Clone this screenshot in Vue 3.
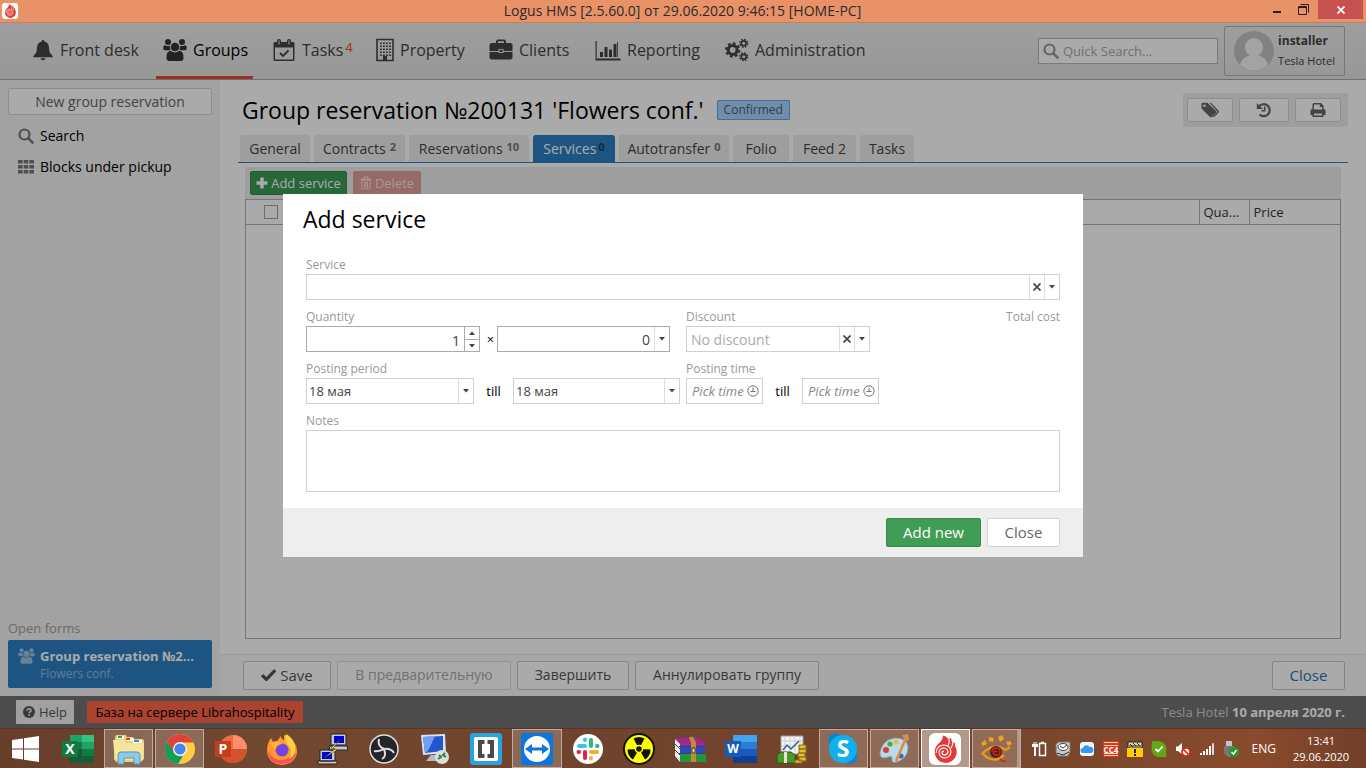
<script setup>
import { ref } from 'vue';

const menu = [
	{ title: 'Front desk', icon: 'bell' },
	{ title: 'Groups', icon: 'users', active: true },
	{ title: 'Tasks', icon: 'calendar', count: 4 },
	{ title: 'Property', icon: 'building' },
	{ title: 'Clients', icon: 'briefcase' },
	{ title: 'Reporting', icon: 'chart' },
	{ title: 'Administration', icon: 'gears' },
];

const tabs = [
	{ title: 'General' },
	{ title: 'Contracts', count: '2' },
	{ title: 'Reservations', count: '10' },
	{ title: 'Services', count: '0' },
	{ title: 'Autotransfer', count: '0' },
	{ title: 'Folio' },
	{ title: 'Feed 2' },
	{ title: 'Tasks' },
];

const taskbar = [
	{ name: 'Excel', icon: 'excel' },
	{ name: 'Explorer', icon: 'explorer', open: true },
	{ name: 'Chrome', icon: 'chrome', open: true },
	{ name: 'PowerPoint', icon: 'powerpoint' },
	{ name: 'Firefox', icon: 'firefox' },
	{ name: 'PuTTY', icon: 'putty' },
	{ name: 'OBS', icon: 'obs' },
	{ name: 'Remote desktop', icon: 'remote' },
	{ name: 'Brackets', icon: 'brackets' },
	{ name: 'TeamViewer', icon: 'teamviewer', open: true },
	{ name: 'Slack', icon: 'slack' },
	{ name: 'Radiation', icon: 'radiation' },
	{ name: 'WinRAR', icon: 'winrar' },
	{ name: 'Word', icon: 'word' },
	{ name: 'Money', icon: 'money' },
	{ name: 'Skype', icon: 'skype', open: true },
	{ name: 'Paint', icon: 'paint', open: true },
	{ name: 'Logus', icon: 'logus', open: true, current: true },
	{ name: 'Viewer', icon: 'eye', open: true, stacked: true },
];

const tray = ['power', 'disk', 'cloud', 'cc', 'warning', 'shield', 'volume', 'signal', 'usb'];

const activeTab = ref('Services');
const service = ref('');
const quantity = ref(1);
const price = ref('0');
const discount = ref('');
const dateFrom = ref('18 мая');
const dateTill = ref('18 мая');
const timeFrom = ref('');
const timeTill = ref('');
const notes = ref('');
</script>

<template>
	<svg class="sprite" aria-hidden="true">
		<symbol id="bell" viewBox="0 0 24 24">
			<path d="M12 1c1 0 1.500.7 1.500 1.600C17.500 3.500 18.500 7 18.600 10c.1 4 1 6 4 8.500v1.500H1.400v-1.500c3-2.500 3.900-4.500 4-8.500C5.500 7 6.500 3.500 10.500 2.600 10.500 1.700 11 1 12 1zM9.300 21h5.400a2.700 2.300 0 0 1-5.400 0z" />
		</symbol>
		<symbol id="users" viewBox="0 0 24 24">
			<circle cx="5" cy="4" r="3" />
			<circle cx="19" cy="4" r="3" />
			<path d="M.3 10.500C0 8 1.200 7.200 2.500 7.400c1.500.8 3 .8 4.500 0-.5 2 0 3.500.8 4.800H2C.9 12.200.4 11.500.3 10.500zM23.700 10.500c.3-2.500-.9-3.300-2.200-3.100-1.500.8-3 .8-4.500 0 .5 2 0 3.500-.8 4.800H22c1.100 0 1.600-.7 1.700-1.700z" />
			<circle cx="12" cy="9" r="4.300" />
			<path d="M3.500 20c0-5 1.500-7 4.500-6.900 2.500 1.700 5.500 1.700 8 0 3-.1 4.500 1.900 4.500 6.900 0 2-1 3-3 3h-11c-2 0-3-1-3-3z" />
		</symbol>
		<symbol id="calendar" viewBox="0 0 24 24">
			<path fill-rule="evenodd" d="M2.500 4H5V3a2 2 0 0 1 4 0v1h6V3a2 2 0 0 1 4 0v1h2.500l1 1v17l-1 1h-19l-1-1V5zM3 9.500v12h18v-12zM6.500 2.500v4h1v-4zM16.500 2.500v4h1v-4z" />
			<path d="M8 15l3 3 5.500-5.500" fill="none" stroke="currentColor" stroke-width="1.800" />
		</symbol>
		<symbol id="building" viewBox="3 0 18 24">
			<path d="M4 1.500h16v21H4z" fill="none" stroke="currentColor" stroke-width="1.600" />
			<path d="M7 5.200h11M7 8.200h11M7 11.200h11M7 14.200h11M7 17.200h11" stroke="currentColor" stroke-width="1.500" stroke-dasharray="1.800 1.200" />
			<path d="M10 18h4v5h-4z" />
		</symbol>
		<symbol id="briefcase" viewBox="0 0 24 24">
			<path fill-rule="evenodd" d="M7 4V3l1.500-1.500h7L17 3v2h5l1.500 1.500V13h-9v-2h-5v2h-9V6.500L2 5h5zm2 1h6V3.300H9z" />
			<path d="M.5 14h9v1h5v-1h9v6L22 21.500H2L.5 20z" />
			<path d="M10.500 11.800h3v2.200h-3z" />
		</symbol>
		<symbol id="chart" viewBox="0 0 25 24">
			<path d="M0 3h1.200v17.500H25v2H0zM4.500 14h3v5h-3zM9 9h3v10H9zM13.500 11.500h3V19h-3zM18 6h3v13h-3z" />
			<path d="M21.500 4h.8v15h-.8z" />
		</symbol>
		<symbol id="gears" viewBox="0 0 25 24">
			<g fill="none" stroke="currentColor">
				<circle cx="8" cy="12" r="4.600" stroke-width="3.200" />
				<circle cx="8" cy="12" r="6.900" stroke-width="2.200" stroke-dasharray="2.900 2.520" />
				<circle cx="19.500" cy="5" r="2.500" stroke-width="1.700" />
				<circle cx="19.500" cy="5" r="4" stroke-width="1.600" stroke-dasharray="1.700 1.440" />
				<circle cx="19.500" cy="19" r="2.500" stroke-width="1.700" />
				<circle cx="19.500" cy="19" r="4" stroke-width="1.600" stroke-dasharray="1.700 1.440" />
			</g>
		</symbol>
		<symbol id="search" viewBox="0 0 16 16">
			<circle cx="6.500" cy="6.500" r="5" fill="none" stroke="currentColor" stroke-width="2.200" />
			<path d="M10.300 10.300l4.300 4.300" stroke="currentColor" stroke-width="2.600" stroke-linecap="round" />
		</symbol>
		<symbol id="blocks" viewBox="0 0 16 14">
			<path d="M0 0h4.600v3.500H0zM5.700 0h4.600v3.500H5.700zM11.400 0H16v3.500h-4.600zM0 5h4.600v3.500H0zM5.700 5h4.600v3.500H5.700zM11.400 5H16v3.500h-4.600zM0 10h4.600v3.500H0zM5.700 10h4.600v3.500H5.700zM11.400 10H16v3.500h-4.600z" />
		</symbol>
		<symbol id="tags" viewBox="0 0 18 16">
			<path fill-rule="evenodd" d="M.5 2v4.500L9 15q1 .8 2 0l4-4q.8-1 0-2L6.500.800H2Q.700.800.500 2zM3.500 2.500a1.300 1.300 0 1 1 0 2.600 1.300 1.300 0 0 1 0-2.600z" />
			<path d="M8.500.8H10L17.400 8.500q.9 1.200 0 2.300L13 15.200l-1-.8 4-4.200q.3-.7-.2-1.300z" />
		</symbol>
		<symbol id="history" viewBox="0 0 16 16">
			<path d="M3 4.500A6 6 0 1 1 3.500 12.500" fill="none" stroke="currentColor" stroke-width="2.200" />
			<path d="M.8 1v6h6z" />
			<path d="M8.700 4.500v4.200H5.500" fill="none" stroke="currentColor" stroke-width="1.500" />
		</symbol>
		<symbol id="printer" viewBox="0 0 16 16">
			<path fill-rule="evenodd" d="M2.500 7V2L3.500 1h7.500l2.500 2.500V7Q15.500 7 15.500 9v4h-2v2h-11v-2h-2V9Q.500 7 2.500 7zM4 7.500h8V5H9.800V2.500H4zM4 11.500v2h8v-2z" />
		</symbol>
		<symbol id="plus" viewBox="0 0 12 12">
			<path d="M4.300.500h3.400v3.800h3.800v3.400H7.700v3.800H4.300V7.700H.500V4.300h3.800z" />
		</symbol>
		<symbol id="trash" viewBox="0 0 12 14">
			<path d="M1.800 4h8.400v8.800H1.800zM.5 3.300h11M4 3V1h4v2M4.400 5.500v5.800M6 5.500v5.800M7.600 5.500v5.800" fill="none" stroke="currentColor" />
		</symbol>
		<symbol id="check" viewBox="0 0 14 12">
			<path d="M1 6.500l4 4L13.300 2" fill="none" stroke="currentColor" stroke-width="3" />
		</symbol>
		<symbol id="help" viewBox="0 0 12 12">
			<circle cx="6" cy="6" r="6" />
			<path d="M3.900 4.500Q4.300 2.800 6 2.800 8 2.900 8 4.500 8 5.300 6.900 6 6.100 6.400 6.100 7.300M6.100 8.300v1.600" fill="none" stroke="#f0f0f0" stroke-width="1.500" />
		</symbol>
		<symbol id="caret" viewBox="0 0 6 4">
			<path d="M0 0h6L3 3.500z" />
		</symbol>
		<symbol id="cross" viewBox="0 0 8 8">
			<path d="M.5.5l7 7M7.500.5l-7 7" stroke="currentColor" stroke-width="1.700" />
		</symbol>
		<symbol id="clock" viewBox="0 0 12 12">
			<path d="M6 2.500v4M3.500 6.500h5" stroke="currentColor" fill="none" />
			<circle cx="6" cy="6" r="5.200" stroke="currentColor" fill="none" />
		</symbol>
		<symbol id="avatar" viewBox="0 0 40 40">
			<circle cx="20" cy="20" r="20" fill="#c4c4c4" />
			<path d="M20 7a9 9 0 0 1 9 9c0 4-2 7-5 8.500 5 1 8.500 4 10 9.500a20 20 0 0 1-28 0c1.500-5.500 5-8.500 10-9.500-3-1.500-5-4.500-5-8.500a9 9 0 0 1 9-9z" fill="#f5f5f5" />
		</symbol>

		<symbol id="windows" viewBox="0 0 27 26">
			<path fill="#fff" d="M0 4l11-1.600v10H0zM12 2.200L27 0v12.400H12zM0 13.400h11v10L0 22zM12 13.400h15V26l-15-2.200z" />
		</symbol>
		<symbol id="excel" viewBox="0 0 32 32">
			<path fill="#21a366" d="M8 2h12v28H8z" />
			<path fill="#33c481" d="M20 2h12v7H20z" />
			<path fill="#107c41" d="M8 9h12v7H8zM20 16h12v7H20z" />
			<path fill="#21a366" d="M20 9h12v7H20z" />
			<path fill="#185c37" d="M8 16h12v7h12v7H8z" />
			<path fill="#107c41" d="M0 8h16v16H0z" />
			<text x="8" y="21" font-size="14" font-weight="700" fill="#fff" text-anchor="middle">X</text>
		</symbol>
		<symbol id="word" viewBox="0 0 32 32">
			<path fill="#41a5ee" d="M8 2h24v7H8z" />
			<path fill="#2b7cd3" d="M8 9h24v7H8z" />
			<path fill="#185abd" d="M8 16h24v7H8z" />
			<path fill="#103f91" d="M8 23h24v7H8z" />
			<path fill="#185abd" d="M0 8h16v16H0z" />
			<text x="8" y="20" font-size="12" font-weight="700" fill="#fff" text-anchor="middle">W</text>
		</symbol>
		<symbol id="powerpoint" viewBox="0 0 32 32">
			<circle cx="18" cy="16" r="14" fill="#ed6c47" />
			<path fill="#ff8f6b" d="M18 2a14 14 0 0 1 14 14H18z" />
			<path fill="#d35230" d="M4 16h28a14 14 0 0 1-28 0z" />
			<path fill="#c43e1c" d="M0 8h16v16H0z" />
			<text x="8" y="21" font-size="14" font-weight="700" fill="#fff" text-anchor="middle">P</text>
		</symbol>
		<symbol id="explorer" viewBox="0 0 32 32">
			<path fill="#e9cf76" d="M2 4l1-2h10l1 2h6l1 2h9l1 2v18l-3 3H3l-2-3z" />
			<path fill="#fff" d="M4 3h7v3H4zM13 5h8v3h-8zM20 7h9v3h-9z" />
			<path fill="#29a845" d="M5 3h4v2H5z" />
			<path fill="#d8402c" d="M13 5h4v2h-4z" />
			<path fill="#2a8fd8" d="M21 7h5v2h-5z" />
			<path fill="#f7e59c" d="M0 7h11l2 3h18l-1 17H2z" />
			<path fill="#8fc9e8" stroke="#4d9ac4" d="M5 31V22q0-3 3-3h16q3 0 3 3v9h-6v-6H11v6z" />
		</symbol>
		<symbol id="chrome" viewBox="0 0 32 32">
			<circle cx="16" cy="16" r="15" fill="#ffcd42" />
			<path fill="#db4437" d="M3 8.500a15 15 0 0 1 26 0L29 9.500H16l-7 10z" />
			<path fill="#0f9d58" d="M3 8.500L10 20q3 4 9 3l-5 8A15 15 0 0 1 3 8.500z" />
			<circle cx="16" cy="16" r="7" fill="#f1f1f1" />
			<circle cx="16" cy="16" r="5.600" fill="#4285f4" />
		</symbol>
		<symbol id="firefox" viewBox="0 0 32 32">
			<path fill="#ff9a2b" d="M5 5l2 4q2-1 4-1l4-5q0 3 3 4V2q3 0 4 5l2-1q7 4 7 12a15 14 0 0 1-30 0Q1 10 5 5z" />
			<path fill="#ff4f5e" d="M1 16q3 9 12 11 10 1 14-7l3 1q-4 11-15 10Q2 30 1 16z" />
			<path fill="#ffd33d" d="M20 1q8 4 9 13 1 9-6 12 4-8 0-13-5-4-3-12z" />
			<circle cx="16" cy="17" r="6.500" fill="#7542e5" />
			<path fill="#ffb52e" d="M5 10q7-3 11 1-6 1-6 5-4 0-5-6z" />
		</symbol>
		<symbol id="putty" viewBox="0 0 32 32">
			<g fill="#c9c9c9" stroke="#222">
				<path d="M14 1h15v11H14zM13 13h17l1 4H12zM3 17h15v11H3zM1 28h19v3H1z" />
			</g>
			<path fill="#0000d8" d="M17 3h10v7H17zM5 19h10v7H5z" />
			<path fill="#ffff28" stroke="#333" stroke-width=".5" d="M24 6l-10 9 4 1L7 25l13-8-4-2z" />
		</symbol>
		<symbol id="obs" viewBox="0 0 32 32">
			<circle cx="16" cy="16" r="14" fill="#252428" stroke="#ddd" stroke-width="1.500" />
			<path fill="none" stroke="#ddd" stroke-width="2" d="M11 6q-2 7 5 10 7-1 10 4M16 16q-5 3-10 2M16 16q3 7-2 10" />
		</symbol>
		<symbol id="remote" viewBox="0 0 32 32">
			<path fill="#d9e2ed" d="M2 2l24-1 1 19L4 22z" />
			<path fill="#2156cf" d="M4 4l20-1v15L6 20z" />
			<path fill="#6fa1f5" d="M4 4l12-1L9 18l-3 2z" />
			<path fill="#b5bcc6" d="M12 22h8l3 6H7z" />
			<circle cx="23" cy="24" r="7" fill="#ddd" />
			<path d="M19 26l3-2-2-2M26 20l-2 2 3 2" stroke="#268c38" stroke-width="2" fill="none" />
		</symbol>
		<symbol id="brackets" viewBox="0 0 32 32">
			<rect width="32" height="32" rx="3" fill="#27a4dd" />
			<rect x="4" y="4" width="24" height="24" rx="2" fill="#fff" />
			<path fill="none" stroke="#4a4a4a" stroke-width="4" d="M14.500 9H10v14h4.500M17.500 9H22v14h-4.500" />
		</symbol>
		<symbol id="teamviewer" viewBox="0 0 32 32">
			<rect width="32" height="32" rx="2" fill="#0b76dd" />
			<circle cx="16" cy="16" r="13" fill="#fff" />
			<path fill="#0b76dd" d="M4 16l7-5v3.500h10V11l7 5-7 5v-3.500H11V21z" />
		</symbol>
		<symbol id="slack" viewBox="0 0 32 32">
			<circle cx="16" cy="16" r="15" fill="#fff" />
			<g fill="none" stroke-width="4" stroke-linecap="round">
				<path stroke="#36c5f0" d="M7 13h6M13 6.500v.5" />
				<path stroke="#2eb67d" d="M19 7v6M25 13h.5" />
				<path stroke="#ecb22e" d="M19 19h6M19 25v.5" />
				<path stroke="#e01e5a" d="M13 19v6M7 19h-.5" />
			</g>
		</symbol>
		<symbol id="radiation" viewBox="0 0 32 32">
			<circle cx="16" cy="16" r="15" fill="#ff0" stroke="#111" stroke-width="2" />
			<path fill="#111" d="M16 16L10.500 5.500q5.500-3 11 0zM16 16l11.500.5q0 6.500-5.500 10zM16 16L4.500 16.500q0 6.500 5.500 10z" />
			<circle cx="16" cy="16" r="3.500" fill="#111" stroke="#ff0" stroke-width="1.500" />
		</symbol>
		<symbol id="winrar" viewBox="0 0 32 32">
			<path fill="#9b2b8a" d="M1 5l20-1 10 5v5H6z" />
			<path fill="#2a46c9" d="M5 14h26v7H5z" />
			<path fill="#25943a" d="M5 21h27v8H6z" />
			<path fill="#eee" d="M1 6l5 5v18l-5-6z" />
			<path stroke="#444" d="M1 11l5 5M1 17l5 5M5 13.500h26M5 20.500h26" />
			<path fill="#c18c35" d="M15 4l4-.2 3 6V29h-5V10z" />
			<path fill="#f3e2a6" stroke="#333" d="M18 15h3v5h-3z" />
		</symbol>
		<symbol id="money" viewBox="0 0 32 32">
			<path fill="#f3f3f3" stroke="#999" d="M5 3h22v18H5z" />
			<path stroke="#ccc" d="M9 3v18M14 3v18M19 3v18M24 3v18M5 8h22M5 13h22" />
			<path stroke="#33609b" stroke-width="1.500" fill="none" d="M7 17l4-5 4 4 8-8" />
			<path fill="#4a9a2d" stroke="#225c14" d="M1 22l4-3h10l4 3v8H1z" />
			<path fill="#e6e6d8" d="M8 19h3v11H8z" />
			<path fill="#e3bd3c" stroke="#8e6f17" d="M23 12h7v4h-7zM23 16h7v4h-7zM22 20h7v4h-7zM23 24h7v4h-7zM19 27h7v3h-7z" />
		</symbol>
		<symbol id="skype" viewBox="0 0 32 32">
			<path fill="#0b84d8" d="M3 2q6-3 11 0a14 14 0 0 1 15 17q3 6-1 10-5 3-10 0A14 14 0 0 1 3 13Q0 7 3 2z" />
			<circle cx="16" cy="16" r="14" fill="#0fb0ee" />
			<text x="16" y="24" font-size="23" font-weight="700" fill="#fff" text-anchor="middle">S</text>
		</symbol>
		<symbol id="paint" viewBox="0 0 32 32">
			<path fill="#b9d9ec" stroke="#83aac4" d="M2 20Q4 7 17 5q12 0 13 9 0 10-9 14-7 3-7-1 1-5-4-3-8 3-8-4z" />
			<circle cx="8" cy="17" r="3" fill="#d8402c" />
			<circle cx="12" cy="11" r="2.600" fill="#48ad3e" />
			<circle cx="18" cy="9" r="2.500" fill="#e8c32f" />
			<circle cx="23" cy="23" r="2.500" fill="#3569c8" />
			<path stroke="#e9872a" stroke-width="2.500" d="M28 5L18 28" />
			<path fill="#c99459" d="M24 2l6-1 1 6-4 2z" />
		</symbol>
		<symbol id="logus" viewBox="0 0 32 32">
			<rect width="32" height="32" rx="6" fill="#fff" />
			<path fill="#e23a38" d="M14 2.500q4 1 5 3.500l3-1 1 4 3 1v3a11 11 0 1 1-15-3.500q3-3 3-7z" />
			<path fill="none" stroke="#fff" stroke-width="1.100" d="M7 20q1-8 8-8 7 1 7 7-1 6-7 6-5-1-5-6 1-4 5-4 4 1 4 4-1 3-4 3-2 0-2-3 1-1 2-1M20 6q1 3-1 7M24 9q0 3-2 6" />
		</symbol>
		<symbol id="eye" viewBox="0 0 32 32">
			<path fill="none" stroke="#e39a17" stroke-width="2.500" d="M2 21Q13 9 26 17l4-3M2 20q11 12 22 2" />
			<circle cx="16" cy="19" r="6" fill="#4e1f14" />
			<path fill="none" stroke="#d4221b" stroke-width="1.500" d="M12 19q0-4 4-4t4 4-4 3-2-3 3 0M20 26q2 3 6 2" />
			<path fill="#f0a21c" d="M1 10l4-3 2 4-4 2zM9 4l5 1-1 4-4-1zM18 4l4-2 2 4-4 3zM26 9l4-1 2 3-4 2z" />
		</symbol>

		<symbol id="power" viewBox="0 0 16 16">
			<path fill="none" stroke="#fff" stroke-width="1.500" d="M8.500 2.500h6v12h-6zM10 1.500h3" />
			<path fill="#fff" d="M1 3h1.500V1h1v2h1V1h1v2H7v3H5v9H3V6H1z" />
		</symbol>
		<symbol id="disk" viewBox="0 0 16 16">
			<path fill="#c8c8c8" stroke="#777" d="M1 3l3-2h11v10l-2 4H3l-2-3z" />
			<ellipse cx="8" cy="6" rx="5" ry="3.500" fill="#fff" stroke="#444" />
			<path stroke="#333" d="M5 5l3 2 4-3M2 12l6 2 6-3" fill="none" />
		</symbol>
		<symbol id="cloud" viewBox="0 0 16 16">
			<rect x="1" y="1" width="14" height="14" rx="3" fill="#f4f7fa" />
			<path fill="#3897f0" d="M4 12a2.500 2.500 0 0 1 0-5 3.500 3.500 0 0 1 6.500-1A3 3 0 0 1 12 12z" />
		</symbol>
		<symbol id="cc" viewBox="0 0 16 16">
			<path fill="#e0331e" d="M0 0h16v16H0z" />
			<path stroke="#f8d9a8" d="M1 1.500h14M1 4.500h14M1 12.500h14M1 14.500h14" />
			<text x="8" y="12" font-size="8" font-weight="700" fill="#fff" text-anchor="middle">CC4</text>
		</symbol>
		<symbol id="warning" viewBox="0 0 16 16">
			<path fill="#e8d8a0" stroke="#222" d="M1 1h14v6H1z" />
			<path stroke="#222" d="M3 3l3 3M6 2l3 3M10 2l3 3M2 5h12" />
			<path fill="#ffcc08" d="M0 7h16v9H0z" />
			<path stroke="#222" stroke-width="2" d="M8 8v4M8 13v2" />
		</symbol>
		<symbol id="shield" viewBox="0 0 16 16">
			<path fill="#61a815" d="M1 0l8 .3A7.500 7.500 0 0 1 15 10l.5 6H8A7.500 7.500 0 0 1 .5 8z" />
			<path stroke="#fff" stroke-width="1.800" fill="none" d="M4.500 8l2.500 2.500 4.500-5" />
		</symbol>
		<symbol id="volume" viewBox="0 0 16 16">
			<path fill="#fff" d="M1 5.500h2L7 2v11L3 10H1z" />
			<circle cx="11" cy="11" r="4" fill="#fff" stroke="#dc2222" stroke-width="1.700" />
			<path stroke="#dc2222" stroke-width="1.700" d="M8.500 8.500l5 5" />
		</symbol>
		<symbol id="signal" viewBox="0 0 16 16">
			<path fill="#fff" d="M1 12h2v2H1zM4 10h2v4H4zM7 8h2v6H7zM10 5h2v9h-2z" />
			<path fill="none" stroke="#ddd" d="M13.500 2.500h1v11h-1z" />
		</symbol>
		<symbol id="usb" viewBox="0 0 16 16">
			<path fill="#c4c4c4" d="M3 0h6v5H3z" />
			<path fill="#777" d="M1 5h10v7l-4 4H5l-4-4z" />
			<circle cx="11" cy="11" r="5" fill="#209b2c" />
			<path stroke="#fff" stroke-width="1.500" fill="none" d="M8.500 11l2 2 3-4" />
		</symbol>
	</svg>

	<div class="desktop">
		<header class="titlebar">
			<svg class="icon-16"><use href="#logus" /></svg>
			<span class="window-title">Logus HMS [2.5.60.0] от 29.06.2020 9:46:15 [HOME-PC]</span>
			<div class="window-controls">
				<button type="button" class="minimise" aria-label="Minimise"></button>
				<button type="button" class="restore" aria-label="Restore">
					<svg width="11" height="11" viewBox="0 0 11 11">
						<path d="M.5 2.500h8v8h-8zM1 3.500h7M2.500.5h8v8" fill="none" stroke="#222" />
					</svg>
				</button>
				<button type="button" class="close-window" aria-label="Close window">
					<svg width="8" height="8"><use href="#cross" /></svg>
				</button>
			</div>
		</header>

		<div class="app">
			<nav class="navbar">
				<div class="menu">
					<a
						v-for="item in menu"
						:key="item.title"
						href="#"
						class="menu-item"
						:class="{ active: item.active }"
					>
						<svg class="icon-24" :class="item.icon"><use :href="'#' + item.icon" /></svg>
						<span>{{ item.title }}</span>
						<sup v-if="item.count">{{ item.count }}</sup>
					</a>
				</div>
				<label class="quick-search">
					<svg class="icon-16"><use href="#search" /></svg>
					<input type="text" placeholder="Quick Search..." aria-label="Quick Search" />
				</label>
				<button type="button" class="user">
					<svg class="avatar"><use href="#avatar" /></svg>
					<span class="user-text">
						<b>installer</b>
						<small>Tesla Hotel</small>
					</span>
				</button>
			</nav>

			<div class="workspace">
				<aside class="sidebar">
					<button type="button" class="btn new-group">New group reservation</button>
					<a href="#" class="side-link">
						<svg class="icon-16"><use href="#search" /></svg>
						Search
					</a>
					<a href="#" class="side-link">
						<svg class="icon-16"><use href="#blocks" /></svg>
						Blocks under pickup
					</a>
					<div class="open-forms">Open forms</div>
					<a href="#" class="form-card">
						<svg class="card-icon"><use href="#users" /></svg>
						<span>
							<b>Group reservation №2...</b>
							<small>Flowers conf.</small>
						</span>
					</a>
				</aside>

				<main class="content">
					<div class="heading">
						<h1>Group reservation №200131 'Flowers conf.'</h1>
						<span class="status">Confirmed</span>
						<div class="tools">
							<button type="button" class="btn" aria-label="Tags">
								<svg width="18" height="16"><use href="#tags" /></svg>
							</button>
							<button type="button" class="btn wide" aria-label="History">
								<svg class="icon-16"><use href="#history" /></svg>
							</button>
							<button type="button" class="btn" aria-label="Print">
								<svg class="icon-16"><use href="#printer" /></svg>
							</button>
						</div>
					</div>

					<div class="tabs">
						<button
							v-for="tab in tabs"
							:key="tab.title"
							type="button"
							class="tab"
							:class="{ active: tab.title === activeTab }"
							@click="activeTab = tab.title"
						>
							{{ tab.title }}<sup v-if="tab.count">{{ tab.count }}</sup>
						</button>
					</div>

					<section class="panel">
						<div class="toolbar">
							<button type="button" class="btn add">
								<svg width="12" height="12"><use href="#plus" /></svg>
								Add service
							</button>
							<button type="button" class="btn delete">
								<svg width="12" height="14"><use href="#trash" /></svg>
								Delete
							</button>
						</div>
						<div class="grid">
							<table>
								<thead>
									<tr>
										<th class="col-check"><input type="checkbox" aria-label="Select all" /></th>
										<th></th>
										<th class="col-quantity">Qua...</th>
										<th class="col-price">Price</th>
									</tr>
								</thead>
							</table>
						</div>
					</section>

					<div class="actions">
						<button type="button" class="btn large save">
							<svg width="15" height="13"><use href="#check" /></svg>
							Save
						</button>
						<button type="button" class="btn large preliminary" disabled>В предварительную</button>
						<button type="button" class="btn large finish">Завершить</button>
						<button type="button" class="btn large annul">Аннулировать группу</button>
						<button type="button" class="btn large close-form">Close</button>
					</div>
				</main>
			</div>

			<footer class="statusbar">
				<button type="button" class="help">
					<svg width="12" height="12"><use href="#help" /></svg>
					Help
				</button>
				<span class="server">База на сервере Librahospitality</span>
				<span class="business-date">Tesla Hotel <b>10 апреля 2020 г.</b></span>
			</footer>

			<div class="overlay">
				<form class="modal" role="dialog" aria-labelledby="modal-title" @submit.prevent>
					<h2 id="modal-title">Add service</h2>
					<div class="fields">
						<div class="row full">
							<label for="service">Service</label>
							<div class="combo">
								<select id="service" v-model="service">
									<option value=""></option>
								</select>
								<button type="button" aria-label="Clear service" @click="service = ''">
									<svg width="8" height="8"><use href="#cross" /></svg>
								</button>
								<span class="arrow"><svg width="6" height="4"><use href="#caret" /></svg></span>
							</div>
						</div>

						<div class="row">
							<label for="quantity">Quantity</label>
							<div class="line amounts">
								<div class="combo dark">
									<input id="quantity" v-model="quantity" type="number" />
									<span class="spinner">
										<button type="button" aria-label="Increase" @click="quantity++">
											<svg class="up" width="6" height="4"><use href="#caret" /></svg>
										</button>
										<button type="button" aria-label="Decrease" @click="quantity--">
											<svg width="6" height="4"><use href="#caret" /></svg>
										</button>
									</span>
								</div>
								<span class="times">×</span>
								<div class="combo dark">
									<select v-model="price" class="right" aria-label="Price">
										<option>0</option>
									</select>
									<span class="arrow"><svg width="6" height="4"><use href="#caret" /></svg></span>
								</div>
							</div>
						</div>
						<div class="row costs">
							<div class="discount">
								<label for="discount">Discount</label>
								<div class="combo">
									<select id="discount" v-model="discount" class="empty">
										<option value="">No discount</option>
									</select>
									<button type="button" aria-label="Clear discount" @click="discount = ''">
										<svg width="8" height="8"><use href="#cross" /></svg>
									</button>
									<span class="arrow"><svg width="6" height="4"><use href="#caret" /></svg></span>
								</div>
							</div>
							<span class="total">Total cost</span>
						</div>

						<div class="row">
							<label for="date-from">Posting period</label>
							<div class="line period">
								<div class="combo">
									<select id="date-from" v-model="dateFrom" class="date">
										<option>18 мая</option>
									</select>
									<span class="arrow"><svg width="6" height="4"><use href="#caret" /></svg></span>
								</div>
								<span class="till">till</span>
								<div class="combo">
									<select v-model="dateTill" class="date" aria-label="Posting period till">
										<option>18 мая</option>
									</select>
									<span class="arrow"><svg width="6" height="4"><use href="#caret" /></svg></span>
								</div>
							</div>
						</div>
						<div class="row">
							<label for="time-from">Posting time</label>
							<div class="line times-of-day">
								<div class="combo time">
									<input id="time-from" v-model="timeFrom" type="text" placeholder="Pick time" />
									<svg width="12" height="12"><use href="#clock" /></svg>
								</div>
								<span class="till">till</span>
								<div class="combo time">
									<input v-model="timeTill" type="text" placeholder="Pick time" aria-label="Posting time till" />
									<svg width="12" height="12"><use href="#clock" /></svg>
								</div>
							</div>
						</div>

						<div class="row full">
							<label for="notes">Notes</label>
							<textarea id="notes" v-model="notes"></textarea>
						</div>
					</div>
					<div class="modal-footer">
						<button type="submit" class="btn large add-new">Add new</button>
						<button type="button" class="btn large close-modal">Close</button>
					</div>
				</form>
			</div>
		</div>

		<div class="taskbar">
			<button type="button" class="start" aria-label="Start">
				<svg width="27" height="26"><use href="#windows" /></svg>
			</button>
			<div class="programs">
				<button
					v-for="program in taskbar"
					:key="program.name"
					type="button"
					class="program"
					:class="{ open: program.open, current: program.current, stacked: program.stacked }"
					:aria-label="program.name"
				>
					<svg width="32" height="32"><use :href="'#' + program.icon" /></svg>
				</button>
			</div>
			<div class="tray">
				<svg v-for="name in tray" :key="name" class="icon-16"><use :href="'#' + name" /></svg>
			</div>
			<span class="language">ENG</span>
			<div class="clock">
				<span>13:41</span>
				<span>29.06.2020</span>
			</div>
		</div>
	</div>
</template>

<style>
body {
	margin: 0;
}
</style>

<style scoped>
* {
	box-sizing: border-box;
}
.sprite {
	display: none;
}
.desktop {
	display: flex;
	flex-direction: column;
	min-height: 100vh;
	font-family: "Open Sans", "Noto Sans", sans-serif;
	font-size: 14px;
	line-height: 20px;
	color: #000;
}
svg {
	fill: currentColor;
	flex: none;
}
button,
input,
select,
textarea {
	font: inherit;
	color: inherit;
	margin: 0;
}
button {
	display: flex;
	align-items: center;
	justify-content: center;
	padding: 0;
	border: 0;
	background: none;
	white-space: nowrap;
}
a {
	color: inherit;
	text-decoration: none;
}
.icon-16 {
	width: 16px;
	height: 16px;
}
.icon-24 {
	width: 24px;
	height: 24px;
}
.icon-24.bell {
	width: 22px;
}
.icon-24.building {
	width: 18px;
}
.icon-24.chart {
	width: 26px;
}
.btn {
	background: #fff;
	border: 1px solid #d4d4d4;
	border-radius: 2px;
	color: #666;
}
.btn.large {
	height: 29px;
	padding-bottom: 2px;
	font-size: 15px;
}

/* window frame */
.titlebar {
	display: grid;
	grid-template-columns: 1fr auto 1fr;
	align-items: center;
	height: 23px;
	padding: 0 3px 0 2px;
	background: #e99268;
	border-bottom: 1px solid #c4805f;
	color: #2b2b2b;
}
.window-controls {
	display: flex;
	justify-content: flex-end;
	align-self: start;
	gap: 9px;
}
.window-controls button {
	height: 19px;
}
.minimise::before {
	content: "";
	width: 8px;
	height: 2px;
	margin: 5px 8px 0;
	background: #222;
}
.close-window {
	width: 45px;
	background: #c75050;
	color: #fff;
}

/* top navigation */
.app {
	position: relative;
	display: flex;
	flex-direction: column;
	flex: 1;
}
.navbar {
	display: flex;
	align-items: center;
	height: 57px;
	padding: 0 21px 0 25px;
	background: linear-gradient(#eee, #e4e4e4);
	border-bottom: 1px solid #a8a8a8;
	color: #444;
}
.menu {
	display: grid;
	grid-template-columns: 119px 97px 92px 101px 94px 118px 153px;
	gap: 12px;
	align-self: stretch;
	margin-right: auto;
	font-size: 16px;
}
.menu-item {
	display: flex;
	align-items: center;
	gap: 6px;
	padding: 0 0 0 7px;
	border-bottom: 3px solid transparent;
	white-space: nowrap;
}
.menu-item.active {
	border-color: #e8492e;
	color: #000;
}
.menu-item.active svg {
	color: #333;
}
.menu-item sup {
	align-self: flex-start;
	margin-left: -4px;
	padding-top: 14px;
	font-size: 13px;
	line-height: 20px;
	color: #e8492e;
}
.quick-search {
	display: flex;
	align-items: center;
	gap: 4px;
	width: 180px;
	height: 26px;
	padding: 0 4px;
	margin-right: 6px;
	background: #fff;
	border: 1px solid #b8b8b8;
	font-size: 13px;
	color: #999;
}
.quick-search input {
	width: 100%;
	padding: 0;
	border: 0;
	outline: 0;
	background: none;
}
.quick-search input::placeholder {
	color: #aaa;
}
.user {
	gap: 4px;
	width: 121px;
	height: 50px;
	border: 1px solid #b4b4b4;
	border-radius: 2px;
	text-align: left;
}
.avatar {
	width: 40px;
	height: 40px;
}
.user-text b,
.user-text small {
	display: block;
	font-size: 12px;
}
.user-text small {
	font-size: 11px;
}

/* sidebar */
.workspace {
	display: flex;
	flex: 1;
}
.sidebar {
	display: flex;
	flex-direction: column;
	width: 220px;
	padding: 8px;
	background: #f3f3f3;
}
.new-group {
	height: 27px;
	margin-bottom: 5px;
}
.side-link {
	display: flex;
	align-items: center;
	gap: 6px;
	height: 31px;
	padding-left: 10px;
}
.side-link svg {
	color: #777;
}
.open-forms {
	margin-top: auto;
	padding-bottom: 2px;
	font-size: 13px;
	color: #a0a0a0;
}
.form-card {
	display: flex;
	gap: 5px;
	height: 48px;
	padding: 6px 10px;
	background: #2d7fc4;
	border-radius: 2px;
	color: #fff;
	white-space: nowrap;
}
.card-icon {
	width: 17px;
	height: 20px;
	color: #9cc3e4;
}
.form-card b,
.form-card small {
	display: block;
	font-size: 13px;
}
.form-card small {
	font-size: 12px;
	line-height: 16px;
	color: #8fbce2;
}

/* content */
.content {
	display: flex;
	flex-direction: column;
	flex: 1;
	min-width: 0;
	background: #fff;
}
.heading {
	display: flex;
	align-items: center;
	height: 55px;
	padding: 4px 18px 0 22px;
}
h1,
h2 {
	margin: 0;
	font-size: 23px;
	font-weight: 500;
	line-height: 32px;
	white-space: nowrap;
}
.status {
	margin-left: 13px;
	padding: 0 6px;
	background: #acd4fc;
	border: 1px solid #6aa5e8;
	border-radius: 1px;
	font-size: 12px;
	line-height: 18px;
	color: #45617d;
}
.tools {
	display: flex;
	align-items: center;
	gap: 6px;
	height: 34px;
	margin-left: auto;
	padding: 0 7px 0 4px;
	background: #eee;
	border-radius: 2px;
}
.tools .btn {
	width: 46px;
	height: 24px;
}
.tools .wide {
	width: 50px;
}
.tabs {
	display: grid;
	grid-template-columns: 70px 91px 120px 82px 110px 56px 63px 54px;
	gap: 4px;
	height: 28px;
	margin: 0 18px;
	padding-left: 2px;
	border-bottom: 1px solid #2d7fc4;
}
.tab {
	background: #eee;
	border-radius: 3px 3px 0 0;
	color: #444;
}
.tab sup {
	margin: -4px 0 0 4px;
	font-size: 11px;
	font-weight: 700;
	line-height: 16px;
	color: #777;
}
.tab.active {
	background: #2d7fc4;
	color: #fff;
}
.tab.active sup {
	margin-left: 2px;
	color: #174063;
}
.panel {
	display: flex;
	flex-direction: column;
	flex: 1;
	margin: 4px 25px 15px;
}
.toolbar {
	display: flex;
	gap: 6px;
	height: 32px;
	padding: 4px 5px;
	background: #eee;
	border-radius: 2px 2px 0 0;
}
.toolbar .btn {
	gap: 3px;
	height: 24px;
	font-size: 13px;
}
.toolbar .add {
	width: 97px;
	background: #3d9b55;
	border-color: #368a4b;
	color: #fff;
}
.toolbar .delete {
	width: 68px;
	background: #e19f99;
	border-color: #e19f99;
	color: #fbe5e3;
}
.grid {
	flex: 1;
	border: 1px solid #b2b2b2;
}
table {
	width: 100%;
	border-collapse: collapse;
	table-layout: fixed;
}
th {
	height: 24px;
	padding: 0 4px;
	border-bottom: 1px solid #b2b2b2;
	font-size: 13px;
	font-weight: 400;
	text-align: left;
	color: #333;
}
.col-check {
	width: 50px;
	padding-left: 18px;
}
.col-check input {
	display: block;
	width: 14px;
	height: 14px;
	appearance: none;
	background: #fff;
	border: 1px solid #a5a5a5;
}
.col-quantity {
	width: 50px;
	border-left: 1px solid #b2b2b2;
}
.col-price {
	width: 91px;
	border-left: 1px solid #b2b2b2;
}
.actions {
	display: flex;
	gap: 6px;
	height: 42px;
	padding: 6px 21px 6px 23px;
	background: #fafafa;
	border-top: 1px solid #e8e8e8;
}
.actions .btn {
	border-color: #c8c8c8;
	color: #555;
}
.actions .save {
	gap: 4px;
	width: 88px;
}
.actions .preliminary,
.actions .finish,
.actions .annul {
	font-size: 14px;
}
.actions .preliminary {
	width: 174px;
	border-color: #dcdcdc;
	color: #aaa;
}
.actions .finish {
	width: 112px;
}
.actions .annul {
	width: 184px;
}
.actions .close-form {
	width: 73px;
	margin-left: auto;
	color: #2872b4;
}

/* status bar */
.statusbar {
	display: flex;
	align-items: center;
	height: 32px;
	padding: 0 21px 0 16px;
	background: #727272;
	font-size: 13px;
}
.help {
	gap: 4px;
	width: 58px;
	height: 24px;
	margin-right: 13px;
	background: #f0f0f0;
	border-radius: 1px;
	color: #555;
}
.server {
	width: 216px;
	background: #ff6548;
	border-radius: 2px;
	line-height: 22px;
	text-align: center;
}
.business-date {
	margin-left: auto;
	color: #d4d4d4;
}
.business-date b {
	color: #fff;
}

/* dialog */
.overlay {
	position: absolute;
	inset: 0;
	display: flex;
	align-items: center;
	justify-content: center;
	background: rgba(0, 0, 0, 0.333);
}
.modal {
	width: 800px;
	background: #fff;
}
h2 {
	padding: 9px 20px 19px;
}
.fields {
	display: grid;
	grid-template-columns: 1fr 1fr;
	gap: 6px;
	padding: 0 23px 16px;
}
.full {
	grid-column: 1 / -1;
}
.row label,
.total {
	display: block;
	padding-top: 2px;
	font-size: 12px;
	line-height: 18px;
	color: #999;
}
.line {
	display: grid;
	align-items: center;
}
.amounts {
	grid-template-columns: 174px 17px 173px;
}
.period {
	grid-template-columns: 168px 39px 167px;
}
.times-of-day {
	grid-template-columns: 77px 39px 77px;
}
.times,
.till {
	font-size: 13px;
	text-align: center;
}
.times {
	padding-left: 4px;
}
.combo {
	display: flex;
	align-items: center;
	height: 26px;
	background: #fff;
	border: 1px solid #d0d0d0;
	color: #444;
}
.combo.dark {
	border-color: #aaa;
}
.combo select,
.combo input {
	flex: 1;
	min-width: 0;
	height: 24px;
	padding: 2px 4px 0;
	border: 0;
	outline: 0;
	background: none;
	appearance: none;
}
.combo input[type="number"] {
	appearance: textfield;
	text-align: right;
}
.combo input::-webkit-inner-spin-button {
	display: none;
}
.combo .right {
	text-align-last: right;
}
.combo .empty {
	color: #aaa;
}
.combo .date {
	padding: 0 2px;
	font-size: 13px;
}
.combo > button,
.arrow {
	display: flex;
	align-items: center;
	justify-content: center;
	width: 15px;
	height: 24px;
	border-left: 1px solid #ddd;
}
.spinner {
	display: flex;
	flex-direction: column;
	width: 15px;
	border-left: 1px solid #aaa;
}
.spinner button {
	height: 12px;
}
.spinner button + button {
	border-top: 1px solid #aaa;
}
.up {
	transform: rotate(180deg);
}
.costs {
	display: flex;
	justify-content: space-between;
}
.discount {
	width: 184px;
}
.time {
	padding-right: 3px;
	color: #777;
}
.combo.time input {
	padding: 0 0 0 5px;
	font-size: 13px;
	font-style: italic;
}
.time input::placeholder {
	color: #888;
}
textarea {
	display: block;
	width: 100%;
	height: 62px;
	border: 1px solid #d0d0d0;
	outline: 0;
	resize: none;
}
.modal-footer {
	display: flex;
	justify-content: flex-end;
	gap: 6px;
	padding: 10px 23px;
	background: #eee;
}
.modal-footer .add-new {
	width: 95px;
	background: #419d56;
	border-color: #368a4b;
	color: #fff;
}
.modal-footer .close-modal {
	width: 73px;
}

/* windows taskbar */
.taskbar {
	display: flex;
	align-items: center;
	height: 40px;
	background: linear-gradient(90deg, #663e2a, #714830 20%, #70432c 45%, #74452d 65%, #7b472d 80%, #8a4a2b 92%, #713f2a);
	border-top: 1px solid #5c3325;
	color: #fff;
}
.start {
	width: 52px;
	padding-right: 2px;
}
.programs {
	display: grid;
	grid-template-columns: repeat(19, 1fr);
	width: 970px;
	height: 39px;
}
.program {
	margin: 0 1px;
	border: 1px solid transparent;
}
.program.open {
	background: rgba(255, 255, 255, 0.2);
	border-color: rgba(255, 255, 255, 0.45);
}
.program.current {
	background: rgba(255, 255, 255, 0.45);
	border-color: #fff;
}
.program.stacked {
	box-shadow: inset -4px 0 0 -1px rgba(255, 255, 255, 0.3);
}
.tray {
	display: flex;
	gap: 8px;
	margin-left: 9px;
}
.language {
	margin-left: auto;
	font-size: 12px;
}
.clock {
	display: flex;
	flex-direction: column;
	width: 90px;
	font-size: 11px;
	line-height: 16px;
	text-align: center;
}
</style>
